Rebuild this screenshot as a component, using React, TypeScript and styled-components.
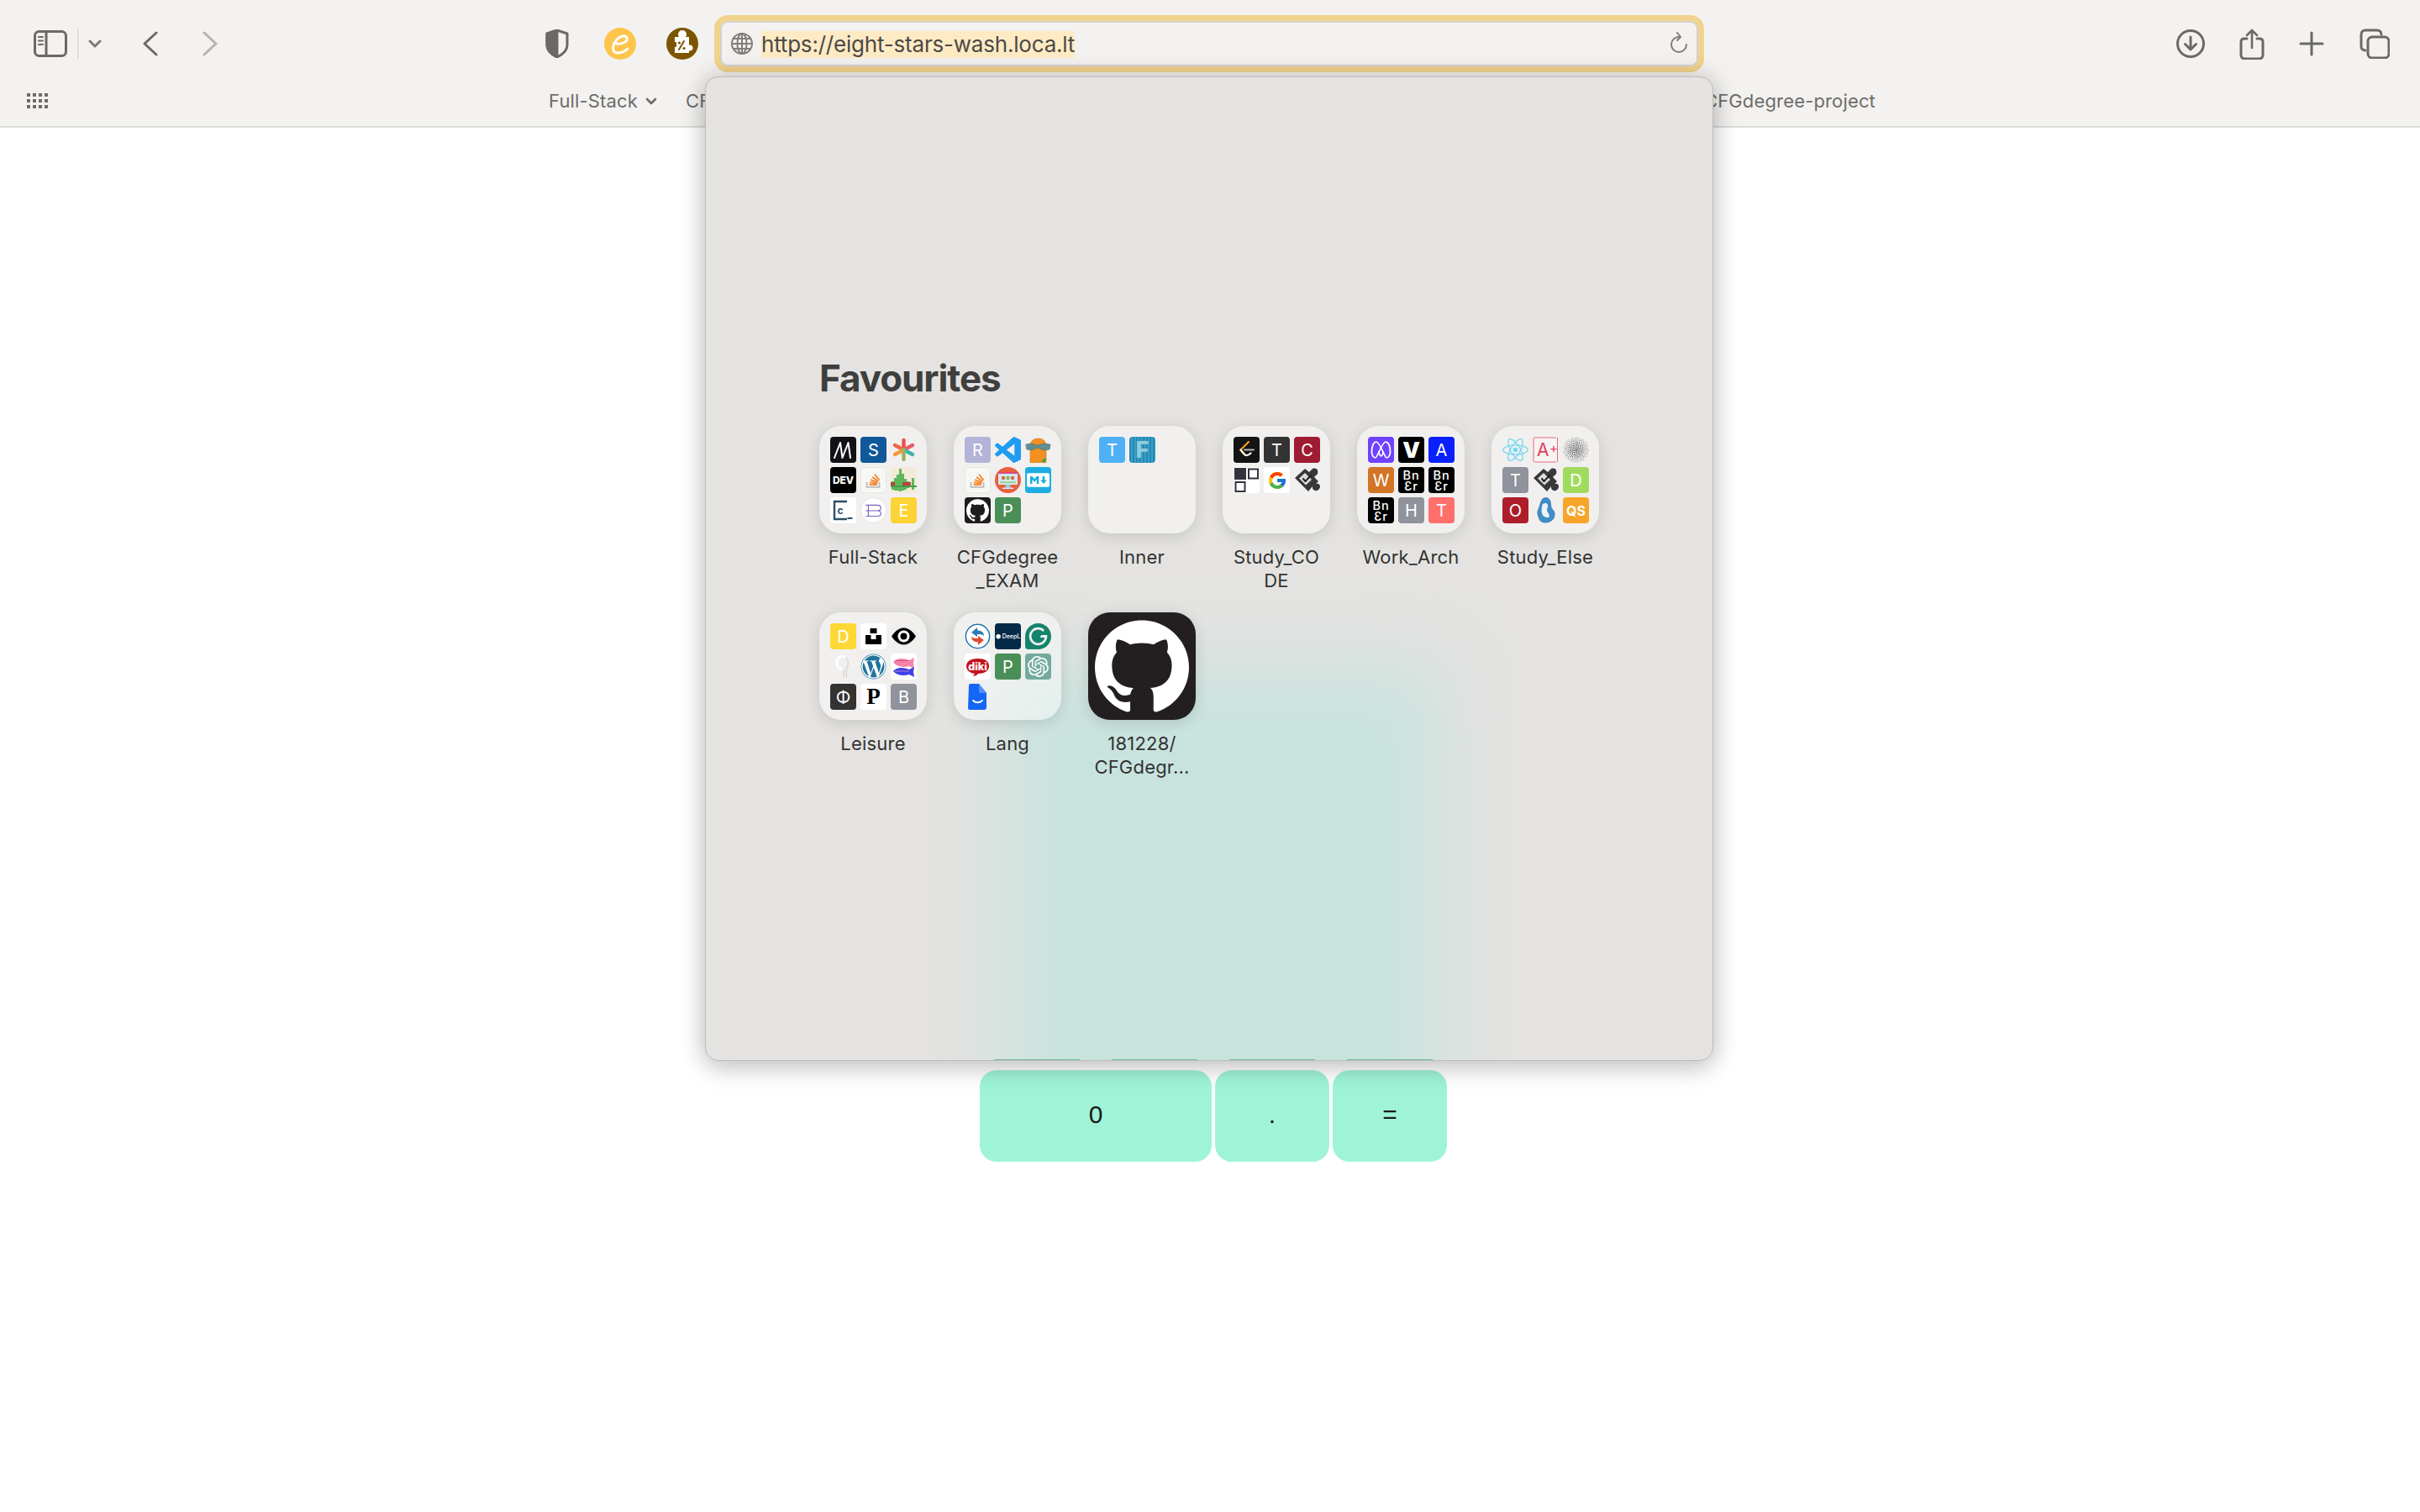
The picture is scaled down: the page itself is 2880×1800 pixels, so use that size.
import React from "react";
import styled, { createGlobalStyle } from "styled-components";
import { SiGithub, SiOpenai, SiGrammarly } from "react-icons/si";
import { FaReact, FaWordpress, FaMarkdown } from "react-icons/fa";
import { FcGoogle } from "react-icons/fc";

const Global = createGlobalStyle`
  html, body { margin: 0; padding: 0; background: #fff; }
  body { min-height: 1800px; font-family: Inter, "Liberation Sans", sans-serif; overflow: hidden; }
`;

const Page = styled.div`
  position: relative;
  width: 2880px;
  height: 1800px;
  background: #fff;
  overflow: hidden;
`;

const Toolbar = styled.header`
  height: 150px;
  background: #f3f2f0;
  border-bottom: 2px solid #dcdbda;
  box-sizing: content-box;
`;

const TopRow = styled.div`
  display: flex;
  align-items: center;
  height: 104px;
`;

const Tool = styled.svg<{ $ml: number; $ink?: string }>`
  flex: none;
  display: block;
  margin-left: ${(p) => p.$ml}px;
  fill: none;
  stroke: ${(p) => p.$ink || "#6b6966"};
  stroke-width: 3;
  stroke-linecap: round;
  stroke-linejoin: round;
`;

const UrlBar = styled.div`
  flex: none;
  margin-left: 19px;
  width: 1178px;
  height: 68px;
  box-sizing: border-box;
  display: flex;
  align-items: center;
  border: 7px solid #f2d38e;
  border-radius: 16px;
  background: #f3f2f0;
  box-shadow: inset 0 0 0 2px #d2d1cf;
  padding: 0 12px 0 13px;
`;

const UrlText = styled.span`
  margin: 2px 0 0 10px;
  background: #feebc4;
  color: #4b4947;
  font-size: 26px;
  line-height: 32px;
  letter-spacing: -0.2px;
  white-space: nowrap;
`;

const Reload = styled.svg`
  margin-left: auto;
  fill: none;
  stroke: #7e7d7b;
  stroke-width: 2;
  stroke-linecap: round;
  stroke-linejoin: round;
`;

const BookmarkRow = styled.nav`
  display: flex;
  align-items: center;
  height: 32px;
  padding-left: 32px;
  color: #6e6c6a;
  font-size: 22px;
  letter-spacing: 0.15px;
`;

const DotGrid = styled.svg`
  fill: #6e6c6a;
`;

const Bookmark = styled.span<{ $ml: number }>`
  margin-left: ${(p) => p.$ml}px;
  white-space: nowrap;
  display: flex;
  align-items: center;
`;

const Caret = styled.svg`
  margin-left: 9px;
  margin-top: 2px;
  fill: none;
  stroke: #6e6c6a;
  stroke-width: 2.6;
  stroke-linecap: round;
  stroke-linejoin: round;
`;

const Keypad = styled.main`
  display: grid;
  grid-template-columns: 276px 136px 136px;
  gap: 4px;
  padding: 1122px 0 0 1166px;
`;

const Key = styled.button`
  height: 109px;
  border: 0;
  border-radius: 20px;
  background: #9ff4d7;
  color: #1a1a1a;
  font-family: "Liberation Sans", Arial, sans-serif;
  font-size: 30px;
  font-weight: 400;
  padding: 0 0 4px;
`;

const Panel = styled.section`
  position: absolute;
  z-index: 10;
  left: 839px;
  top: 91px;
  width: 1200px;
  height: 1172px;
  box-sizing: border-box;
  border: 1px solid #bdbcba;
  border-radius: 16px;
  background: #e4e3e1;
  box-shadow: 0 0 30px rgba(0, 0, 0, 0.2), 0 12px 30px rgba(0, 0, 0, 0.12);
  overflow: hidden;
  padding: 332px 0 0 135px;
`;

const Glow = styled.div`
  position: absolute;
  left: 358px;
  top: 705px;
  width: 515px;
  height: 640px;
  background: #c8e3de;
  filter: blur(44px);
`;

const EdgeRow = styled.div`
  position: absolute;
  left: 343px;
  bottom: 0;
  display: flex;
  gap: 38px;
`;

const EdgeBit = styled.i`
  display: block;
  width: 102px;
  height: 1px;
  background: #6fb9a0;
`;

const Heading = styled.h2`
  position: relative;
  margin: 0 0 31px;
  font-size: 44px;
  line-height: 52px;
  font-weight: 700;
  letter-spacing: -1.1px;
  color: #3f3f3e;
`;

const Grid = styled.div`
  position: relative;
  display: grid;
  grid-template-columns: repeat(6, 128px);
  column-gap: 32px;
  row-gap: 24px;
`;

const Item = styled.div`
  display: flex;
  flex-direction: column;
  align-items: center;
`;

const Tile = styled.div<{ $dark?: boolean }>`
  width: 128px;
  height: 128px;
  box-sizing: border-box;
  border-radius: 26px;
  padding: 13px;
  background: ${(p) => (p.$dark ? "#231f20" : "rgba(255,255,255,0.47)")};
  box-shadow: 0 4px 18px rgba(0, 0, 0, 0.13);
  display: grid;
  grid-template-columns: repeat(3, 31px);
  grid-auto-rows: 31px;
  gap: 5px;
  align-content: start;
`;

const BigMark = styled.div`
  width: 128px;
  height: 128px;
  margin: -13px;
  display: flex;
  align-items: center;
  justify-content: center;
  color: #fff;
`;

const Label = styled.div`
  margin-top: 14px;
  height: 56px;
  width: 150px;
  text-align: center;
  white-space: pre-line;
  color: #333;
  font-size: 22px;
  line-height: 28px;
  letter-spacing: 0.2px;
`;

const Glyph = styled.span<{ $bg?: string; $fg?: string; $size?: number; $font?: string; $weight?: number; $round?: boolean; $rim?: boolean }>`
  width: 31px;
  height: 31px;
  box-sizing: border-box;
  border-radius: ${(p) => (p.$round ? "50%" : "4px")};
  display: flex;
  align-items: center;
  justify-content: center;
  overflow: hidden;
  background: ${(p) => p.$bg || "transparent"};
  color: ${(p) => p.$fg || "#fff"};
  font-family: ${(p) => p.$font || "Inter, sans-serif"};
  font-size: ${(p) => p.$size || 20}px;
  font-weight: ${(p) => p.$weight || 400};
  line-height: 1;
  ${(p) => (p.$rim ? "border: 1px solid #e7e6e5;" : "")}
`;

const Stacked = styled.span`
  display: block;
  text-align: center;
  font-size: 14.5px;
  line-height: 13px;
  font-weight: 500;
  letter-spacing: 0.8px;
`;

const Svg31 = ({ children }: { children: React.ReactNode }) => (
  <svg width="31" height="31" viewBox="0 0 31 31" fill="none" strokeLinecap="round" strokeLinejoin="round">
    {children}
  </svg>
);

const L = (t: string, bg: string) => <Glyph $bg={bg}>{t}</Glyph>;

const Medium = (
  <Glyph $bg="#111116">
    <Svg31>
      <path d="M5 25 L12 7 L14.500 25 L21.500 7 L24 25" stroke="#fff" strokeWidth="2" />
    </Svg31>
  </Glyph>
);
const Asterisk = (
  <Glyph>
    <Svg31>
      <g strokeWidth="4.4">
        <path d="M15.5 15.5V4" stroke="#ef4f4a" />
        <path d="M15.5 15.5L5 10" stroke="#f0664a" />
        <path d="M15.5 15.5L26 10" stroke="#e85a6a" />
        <path d="M15.5 15.5L5 21" stroke="#f59a3e" />
        <path d="M15.5 15.5L26 21" stroke="#3fb3a8" />
        <path d="M15.5 15.5V27" stroke="#a0b060" />
      </g>
    </Svg31>
  </Glyph>
);
const Dev = <Glyph $bg="#000" $size={12} $weight={800}>DEV</Glyph>;
const Stack = (
  <Glyph $bg="#f7f7f6" $rim>
    <Svg31>
      <path d="M7 19v5.5h16V19" stroke="#bdbcba" strokeWidth="2" />
      <g stroke="#f48024" strokeWidth="1.9">
        <path d="M11 21.5h8.5" />
        <path d="M11.3 18.5l8.2 1.3" />
        <path d="M12.5 15.3l7.6 3" />
        <path d="M14.6 12l6.5 4.6" />
        <path d="M17.6 8.8l5 6.2" />
      </g>
    </Svg31>
  </Glyph>
);
const Chart = (
  <Glyph $bg="#f3ead8">
    <svg width="31" height="31" viewBox="0 0 31 31">
      <g fill="#5cb85c">
        <rect x="1" y="17" width="3" height="10" />
        <rect x="4" y="13" width="3" height="15" />
        <rect x="7" y="9" width="3" height="19" />
        <rect x="10" y="2" width="3" height="27" />
        <rect x="13" y="8" width="3" height="20" />
        <rect x="16" y="14" width="3" height="13" />
        <rect x="19" y="17" width="3" height="8" />
        <rect x="25" y="13" width="3" height="14" />
      </g>
      <rect x="0" y="22" width="31" height="2" fill="#4a9a4a" />
      <rect x="0" y="18" width="5" height="4" fill="#b9433a" />
      <rect x="14" y="18" width="10" height="4" fill="#b9433a" />
    </svg>
  </Glyph>
);
const CodeC = (
  <Glyph $bg="#fff">
    <svg width="31" height="31" viewBox="0 0 31 31" fill="none">
      <path d="M20 5H5v21h15" stroke="#2c4f68" strokeWidth="2.4" />
      <text x="8.5" y="20" fontSize="12" fontWeight="700" fontFamily="Inter, sans-serif" fill="#2c4f68">c</text>
      <rect x="20.5" y="24" width="6" height="2" fill="#2c4f68" />
    </svg>
  </Glyph>
);
const Bulma = (
  <Glyph $bg="#fff" $round $rim>
    <Svg31>
      <path d="M6 9h14c3 0 5 1 5 3.500S23 16 20 16H6M20 16c3 0 5 1.200 5 3.500S23 23 20 23H6M9 9v14" stroke="#7c62bf" strokeWidth="1.2" />
    </Svg31>
  </Glyph>
);
const VsCode = (
  <Glyph>
    <svg width="31" height="31" viewBox="0 0 24 24">
      <path
        fill="#1f9cf0"
        d="M23.15 2.587L18.21.21a1.494 1.494 0 0 0-1.705.29l-9.46 8.63-4.12-3.128a.999.999 0 0 0-1.276.057L.327 7.261A1 1 0 0 0 .326 8.74L3.899 12 .326 15.26a1 1 0 0 0 .001 1.479L1.65 17.94a.999.999 0 0 0 1.276.057l4.12-3.128 9.46 8.63a1.492 1.492 0 0 0 1.704.29l4.942-2.377A1.5 1.5 0 0 0 24 20.06V3.939a1.5 1.500 0 0 0-.85-1.352zm-5.146 14.861L10.826 12l7.178-5.448v10.896z"
      />
    </svg>
  </Glyph>
);
const Bottle = (
  <Glyph>
    <Svg31>
      <path d="M6 31V11C6 5 10 2 15.500 2S25 5 25 11v20z" fill="#f39120" stroke="#c97a1e" strokeWidth="0.6" />
      <path d="M1 9l6-1 8 2 8-2 7 1-1 6-7 1-7-3-7 3-6-1z" fill="#5f8f92" stroke="#4f6f70" strokeWidth="0.6" />
      <path d="M19 29l5-4 1 3-3 3z" fill="#49a044" />
    </Svg31>
  </Glyph>
);
const Monitor = (
  <Glyph $bg="#e85f3f" $round>
    <svg width="31" height="31" viewBox="0 0 31 31">
      <rect x="4" y="6" width="23" height="15" rx="1" fill="#cfeaf0" />
      <rect x="4" y="6" width="23" height="2" fill="#d9487e" />
      <circle cx="10" cy="13" r="2.200" fill="#e85f3f" />
      <circle cx="15.500" cy="13" r="2.200" fill="#7cba5a" />
      <circle cx="21" cy="13" r="2.200" fill="#e85f3f" />
      <rect x="6" y="17.500" width="19" height="1.400" fill="#8fc86a" />
      <rect x="12.500" y="21" width="6" height="4" fill="#9cc8d8" />
      <rect x="9" y="24.500" width="13" height="1.600" fill="#cfeaf0" />
    </svg>
  </Glyph>
);
const Mark = (
  <Glyph $bg="#1dade2" $fg="#fff">
    <FaMarkdown size={27} />
  </Glyph>
);
const GitSmall = (
  <Glyph $bg="#1f1c1d">
    <SiGithub size={27} color="#fff" />
  </Glyph>
);
const Striped = (
  <Glyph $bg="repeating-linear-gradient(90deg,#2488b2 0 2px,#3a9fc6 2px 4px)" $fg="#8fcbe0" $size={27} $weight={800}>F</Glyph>
);
const Leet = (
  <Glyph $bg="#141414">
    <Svg31>
      <path d="M18 6L8.500 15.500l5.500 6" stroke="#f89f1b" strokeWidth="2.200" />
      <path d="M8.500 15.500c0 0 4 6 6 6.500s4.500-1 6-2.500" stroke="#fff" strokeWidth="2.200" />
      <path d="M13 15.500h11" stroke="#b3b3b3" strokeWidth="2" />
    </Svg31>
  </Glyph>
);
const Squares = (
  <Glyph $bg="#fff">
    <svg width="31" height="31" viewBox="0 0 31 31" fill="none">
      <rect x="1" y="1" width="14" height="14" fill="#33323f" />
      <rect x="18" y="2.500" width="11" height="11" stroke="#33323f" strokeWidth="2" />
      <rect x="2.500" y="18" width="11" height="11" stroke="#33323f" strokeWidth="2" />
    </svg>
  </Glyph>
);
const Google = (
  <Glyph $bg="#fff">
    <FcGoogle size={24} />
  </Glyph>
);
const Puzzle = (
  <Glyph>
    <svg width="31" height="31" viewBox="0 0 31 31" strokeLinecap="round" strokeLinejoin="round">
      <path d="M1 13L13 2l5 4 3-3c2-2 6-2 7 1s0 5-2 6l-2 2 5 5-3 3c2-1 5 0 5 3s-3 6-6 5-3-3-3-5l-5 6L1 13z" fill="#383838" />
      <path d="M6 13.500L13 7l8 8-7 6.500z" fill="#dcdcdc" />
      <path d="M11 14l2.500 3L20 10" fill="none" stroke="#222" strokeWidth="2" />
    </svg>
  </Glyph>
);
const Loops = (
  <Glyph $bg="#6f42ff">
    <Svg31>
      <g stroke="#fff" strokeWidth="1.700">
        <path d="M4.500 18C4.500 10 7 6 10 6c4 0 10 19 12 19 3 0 4.500-4 4.500-7" />
        <path d="M26.500 18C26.500 10 24 6 21 6c-4 0-10 19-12 19-3 0-4.500-4-4.500-7" />
        <path d="M12.800 18Q15.500 28 18.200 18" />
      </g>
    </Svg31>
  </Glyph>
);
const Vee = <Glyph $bg="#000" $size={26} $weight={900}>V</Glyph>;
const Bn = (
  <Glyph $bg="#000">
    <Stacked>Bn<br />Ɛr</Stacked>
  </Glyph>
);
const ReactMark = (
  <Glyph $fg="#74d7f2">
    <FaReact size={31} />
  </Glyph>
);
const APlus = (
  <Glyph $bg="#f6f3f3" $fg="#e0405a" $size={20}>
    <svg width="31" height="31" viewBox="0 0 31 31" fill="none">
      <path d="M28 1H1v29h27M29.500 1v29" stroke="#d9485f" strokeWidth="0.800" />
      <text x="5" y="23" fontSize="21" fontFamily="Inter, sans-serif" fill="#e0405a">A</text>
      <text x="20" y="19" fontSize="15" fontFamily="Inter, sans-serif" fill="#e0405a">+</text>
    </svg>
  </Glyph>
);
const Halftone = (
  <Glyph>
    <svg width="31" height="31" viewBox="0 0 31 31">
      {Array.from({ length: 240 }).map((_, i) => {
        const r = 15.2 * Math.sqrt((i + 0.5) / 240);
        const a = i * 2.39996;
        return (
          <circle key={i} cx={15.5 + r * Math.cos(a)} cy={15.5 + r * Math.sin(a)} r={0.38 + (0.35 * (15.2 - r)) / 15.2} fill="#3c3c3c" />
        );
      })}
    </svg>
  </Glyph>
);
const Blob = (
  <Glyph>
    <Svg31>
      <path d="M12 2c4-3 8-1 9 3s0 7 3 10 3 10-2 13-12 3-14-2-3-8-1-12 2-9 5-12z" fill="#3d8fca" stroke="#2f6fa8" strokeWidth="0.800" />
      <path d="M12 8c3-2 6-1 6 2s-2 5 0 8 3 6 0 6-6-1-7-5 0-9 1-11z" fill="#eef1f3" />
    </Svg31>
  </Glyph>
);
const Qs = <Glyph $bg="#f7a528" $size={16} $weight={700}>QS</Glyph>;
const Unsplash = (
  <Glyph $bg="#fff">
    <svg width="31" height="31" viewBox="0 0 31 31" fill="#000">
      <rect x="11.500" y="6" width="8" height="6" />
      <path d="M6 14h6.500v5h6v-5H25v11H6z" />
    </svg>
  </Glyph>
);
const Eye = (
  <Glyph $bg="#efefee">
    <Svg31>
      <path d="M1 15.500C6 8 11 5.500 15.500 5.500S25 8 30 15.500C25 23 20 25.500 15.500 25.500S6 23 1 15.500z" fill="#000" />
      <circle cx="15.500" cy="15.500" r="7" fill="#fff" />
      <circle cx="15.500" cy="15.500" r="4" fill="#000" />
    </Svg31>
  </Glyph>
);
const Bird = (
  <Glyph>
    <Svg31>
      <path d="M17 4c-5-2-10 2-9 8s6 7 8 6" stroke="#fff" strokeWidth="2.600" />
      <path d="M19 6c3 2 3 7 1 11s-1 7 0 11M16 18v10" stroke="#d5d4d2" strokeWidth="1.300" />
    </Svg31>
  </Glyph>
);
const Wp = (
  <Glyph $bg="#fff" $round $fg="#21759b">
    <FaWordpress size={31} />
  </Glyph>
);
const Fish = (
  <Glyph $bg="#fff">
    <svg width="31" height="31" viewBox="0 0 31 31">
      <path d="M3 10c4-5 12-5 19-2l6-3-1 7 1 6-6-3c-7 2-15 1-19-5z" fill="#f783ac" />
      <path d="M5 8.500h17" stroke="#b04070" strokeWidth="0.700" />
      <path d="M3 21c4-5 12-5 19-2l6-3-1 6 1 6-6-3c-7 2-15 1-19-4z" fill="#3f3fe8" />
      <path d="M5 21h17" stroke="#e8a0c0" strokeWidth="0.700" />
    </svg>
  </Glyph>
);
const Phi = <Glyph $bg="#333">Φ</Glyph>;
const SerifP = <Glyph $bg="#fff" $fg="#000" $size={27} $weight={700} $font={'"Liberation Serif", serif'}>P</Glyph>;
const Sync = (
  <Glyph $bg="#fff" $round>
    <Svg31>
      <circle cx="15.500" cy="15.500" r="14.200" stroke="#1d72aa" strokeWidth="1.500" />
      <path d="M23 15c0-4-3-6.500-8-6.500V5l-7 6 7 5v-3c3 0 6 0 8 2z" fill="#2a7cb8" />
      <path d="M8 16c0 4 3 6.500 8 6.500V26l7-6-7-5v3c-3 0-6 0-8-2z" fill="#e04a32" />
    </Svg31>
  </Glyph>
);
const Deepl = <Glyph $bg="#052a48" $size={7} $weight={500}>⬢ DeepL</Glyph>;
const Grammarly = (
  <Glyph $fg="#15846d">
    <SiGrammarly size={31} />
  </Glyph>
);
const Diki = (
  <Glyph $bg="#fff">
    <svg width="31" height="31" viewBox="0 0 31 31">
      <path d="M2 15c0-6 6-9 14-9s13 3 13 9-6 9-13 9c-1 2-4 3-6 3l2-3c-6-1-10-4-10-9z" fill="#c4121c" />
      <text x="15.500" y="19.500" textAnchor="middle" fontSize="12.500" fontWeight="800" fontFamily="Inter, sans-serif" fill="#fff">diki</text>
    </svg>
  </Glyph>
);
const Gpt = (
  <Glyph $bg="#74aa9c">
    <SiOpenai size={25} color="#fff" />
  </Glyph>
);
const Doc = (
  <Glyph>
    <Svg31>
      <path d="M5 2c0-1 1-2 2-2h10l9 11v17c0 2-1 3-3 3H6c-1 0-2-1-2-2z" fill="#1566f5" />
      <path d="M17 0l9 11h-9z" fill="#4d90f8" />
      <path d="M10 20c3 3 8 3 11 0" stroke="#fff" strokeWidth="1.800" />
    </Svg31>
  </Glyph>
);

const folders: { label: string; icons: React.ReactNode[] }[] = [
  { label: "Full-Stack", icons: [Medium, L("S", "#11589b"), Asterisk, Dev, Stack, Chart, CodeC, Bulma, L("E", "#fdd335")] },
  { label: "CFGdegree\n_EXAM", icons: [L("R", "#b4b4d8"), VsCode, Bottle, Stack, Monitor, Mark, GitSmall, L("P", "#4a8f57")] },
  { label: "Inner", icons: [L("T", "#4fb0f5"), Striped] },
  { label: "Study_CO\nDE", icons: [Leet, L("T", "#333"), L("C", "#a01c33"), Squares, Google, Puzzle] },
  { label: "Work_Arch", icons: [Loops, Vee, L("A", "#0a20ff"), L("W", "#d37526"), Bn, Bn, Bn, L("H", "#90929c"), L("T", "#ff6f6b")] },
  { label: "Study_Else", icons: [ReactMark, APlus, Halftone, L("T", "#90929c"), Puzzle, L("D", "#a0db5f"), L("O", "#ae1e2a"), Blob, Qs] },
  { label: "Leisure", icons: [L("D", "#fdd835"), Unsplash, Eye, Bird, Wp, Fish, Phi, SerifP, L("B", "#90929c")] },
  { label: "Lang", icons: [Sync, Deepl, Grammarly, Diki, L("P", "#4a8f57"), Gpt, Doc] },
];

export default function App() {
  return (
    <Page>
      <Global />
      <Toolbar>
        <TopRow>
          <Tool $ml={40} width="40" height="32" viewBox="0 0 40 32">
            <rect x="1.500" y="1.500" width="37" height="29" rx="5" />
            <path d="M15 1.500v29" />
            <path d="M6 8h5M6 12.500h5M6 17h5" strokeWidth="2" />
          </Tool>
          <Tool $ml={12} $ink="#e0dfdd" width="2" height="36" viewBox="0 0 2 36">
            <path d="M1 0v36" strokeWidth="2" />
          </Tool>
          <Tool $ml={11} $ink="#7d7b79" width="16" height="10" viewBox="0 0 16 10">
            <path d="M2 2l6 6 6-6" />
          </Tool>
          <Tool $ml={49} width="18" height="30" viewBox="0 0 18 30">
            <path d="M16 2L2 15l14 13" />
          </Tool>
          <Tool $ml={53} $ink="#b5b4b2" width="18" height="30" viewBox="0 0 18 30">
            <path d="M2 2l14 13L2 28" />
          </Tool>
          <Tool $ml={390} width="28" height="34" viewBox="0 0 28 34" strokeWidth="2">
            <path d="M14 1l12 4v14c0 6-6 11-12 14C8 30 2 25 2 19V5z" />
            <path d="M14 1v32C8 30 2 25 2 19V5z" fill="#6b6966" />
          </Tool>
          <Tool $ml={42} $ink="#fff" width="38" height="38" viewBox="0 0 38 38" strokeWidth="2">
            <circle cx="19" cy="19" r="19" fill="#fec54c" stroke="none" />
            <path d="M15 19c5 1 14-2 12-7-2-4-10-2-14 5-4 7-3 13 3 13 4 0 9-2 12-5" />
          </Tool>
          <Tool $ml={36} $ink="none" width="38" height="38" viewBox="0 0 38 38">
            <circle cx="19" cy="19" r="19" fill="#7c5500" />
            <rect x="10" y="11" width="17" height="19" fill="#fff" />
            <circle cx="19" cy="8" r="5" fill="#fff" />
            <circle cx="28" cy="24" r="3.500" fill="#fff" />
            <rect x="10" y="17" width="2" height="6" fill="#7c5500" />
            <path d="M15 26l6-10" stroke="#7c5500" strokeWidth="2" fill="none" style={{ stroke: "#7c5500" }} />
            <circle cx="15.500" cy="18" r="1.600" fill="#7c5500" />
            <circle cx="21" cy="24.500" r="1.600" fill="#7c5500" />
          </Tool>
          <UrlBar>
            <svg width="26" height="26" viewBox="0 0 26 26" fill="none" stroke="#807f7d" strokeWidth="2">
              <circle cx="13" cy="13" r="12" />
              <ellipse cx="13" cy="13" rx="5.500" ry="12" />
              <path d="M13 1v24M1 13h24M3 7h20M3 19h20" />
            </svg>
            <UrlText>https://eight-stars-wash.loca.lt</UrlText>
            <Reload width="22" height="28" viewBox="0 0 22 28">
              <path d="M11 6a9 9 0 1 0 9 9" />
              <path d="M9 1l4 5-4 4" />
            </Reload>
          </UrlBar>
          <Tool $ml={562} width="34" height="34" viewBox="0 0 34 34" strokeWidth="2.600">
            <circle cx="17" cy="17" r="15.500" />
            <path d="M17 9v15M10.500 17.500L17 24l6.500-6.500" />
          </Tool>
          <Tool $ml={41} width="30" height="37" viewBox="0 0 30 37">
            <path d="M9 12H6c-2 0-4 1-4 4v16c0 2 2 4 4 4h18c2 0 4-2 4-4V16c0-3-2-4-4-4h-3" />
            <path d="M15 23V2M9 8l6-6 6 6" strokeWidth="2.600" />
          </Tool>
          <Tool $ml={41} width="30" height="30" viewBox="0 0 30 30">
            <path d="M15 2v26M2 15h26" />
          </Tool>
          <Tool $ml={42} width="36" height="36" viewBox="0 0 36 36">
            <path d="M7 26c-3 0-5-2-5-5V7c0-3 2-5 5-5h14c3 0 5 2 5 5" />
            <rect x="10" y="10" width="25" height="25" rx="5" />
          </Tool>
        </TopRow>
        <BookmarkRow>
          <DotGrid width="25" height="18" viewBox="0 0 25 18">
            {[0, 7, 14].map((y) =>
              [0, 7, 14, 21].map((x) => <rect key={`${x}-${y}`} x={x} y={y} width="4" height="4" />)
            )}
          </DotGrid>
          <Bookmark $ml={596}>
            Full-Stack
            <Caret width="14" height="10" viewBox="0 0 14 10">
              <path d="M2 2l5 5 5-5" />
            </Caret>
          </Bookmark>
          <Bookmark $ml={34}>CFGdegree_EXAM</Bookmark>
          <Bookmark $ml={1017}>CFGdegree-project</Bookmark>
        </BookmarkRow>
      </Toolbar>
      <Keypad>
        <Key>0</Key>
        <Key>.</Key>
        <Key>=</Key>
      </Keypad>
      <Panel>
        <Glow />
        <EdgeRow>
          <EdgeBit />
          <EdgeBit />
          <EdgeBit />
          <EdgeBit />
        </EdgeRow>
        <Heading>Favourites</Heading>
        <Grid>
          {folders.map((f) => (
            <Item key={f.label}>
              <Tile>
                {f.icons.map((icon, i) => (
                  <React.Fragment key={i}>{icon}</React.Fragment>
                ))}
              </Tile>
              <Label>{f.label}</Label>
            </Item>
          ))}
          <Item>
            <Tile $dark>
              <BigMark>
                <SiGithub size={112} />
              </BigMark>
            </Tile>
            <Label>{"181228/\nCFGdegr..."}</Label>
          </Item>
        </Grid>
      </Panel>
    </Page>
  );
}
